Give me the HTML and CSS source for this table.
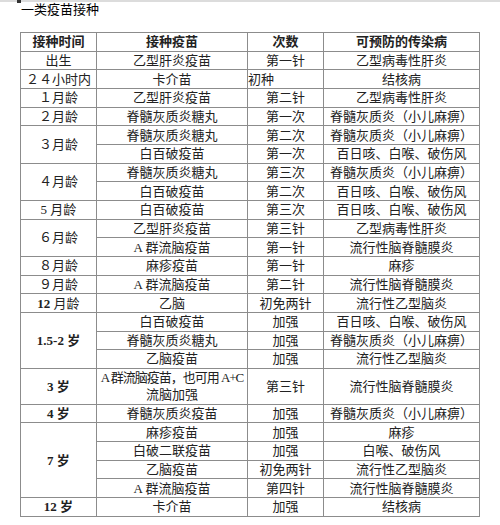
FILE: index.html
```html
<!DOCTYPE html>
<html lang="zh-CN">
<head>
<meta charset="utf-8">
<title>一类疫苗接种</title>
<link rel="stylesheet" href="styles.css">
</head>
<body>
<div class="topbar"><span class="mark"></span></div>
<h1 class="title">一类疫苗接种</h1>
<table class="schedule">
  <colgroup>
    <col class="c1"><col class="c2"><col class="c3"><col class="c4">
  </colgroup>
  <thead>
    <tr><th>接种时间</th><th>接种疫苗</th><th>次数</th><th>可预防的传染病</th></tr>
  </thead>
  <tbody>
    <tr><td>出生</td><td>乙型肝炎疫苗</td><td>第一针</td><td>乙型病毒性肝炎</td></tr>
    <tr><td>２４小时内</td><td>卡介苗</td><td class="left">初种</td><td>结核病</td></tr>
    <tr><td>１月龄</td><td>乙型肝炎疫苗</td><td>第二针</td><td>乙型病毒性肝炎</td></tr>
    <tr><td>２月龄</td><td>脊髓灰质炎糖丸</td><td>第一次</td><td>脊髓灰质炎（小儿麻痹）</td></tr>
    <tr><td rowspan="2">３月龄</td><td>脊髓灰质炎糖丸</td><td>第二次</td><td>脊髓灰质炎（小儿麻痹）</td></tr>
    <tr><td>白百破疫苗</td><td>第一次</td><td>百日咳、白喉、破伤风</td></tr>
    <tr><td rowspan="2">４月龄</td><td>脊髓灰质炎糖丸</td><td>第三次</td><td>脊髓灰质炎（小儿麻痹）</td></tr>
    <tr><td>白百破疫苗</td><td>第二次</td><td>百日咳、白喉、破伤风</td></tr>
    <tr><td>5 月龄</td><td>白百破疫苗</td><td>第三次</td><td>百日咳、白喉、破伤风</td></tr>
    <tr><td rowspan="2">６月龄</td><td>乙型肝炎疫苗</td><td>第三针</td><td>乙型病毒性肝炎</td></tr>
    <tr><td>A 群流脑疫苗</td><td>第一针</td><td>流行性脑脊髓膜炎</td></tr>
    <tr><td>８月龄</td><td>麻疹疫苗</td><td>第一针</td><td>麻疹</td></tr>
    <tr><td>９月龄</td><td>A 群流脑疫苗</td><td>第二针</td><td>流行性脑脊髓膜炎</td></tr>
    <tr><td><b>12</b> 月龄</td><td>乙脑</td><td>初免两针</td><td>流行性乙型脑炎</td></tr>
    <tr><td rowspan="3" class="bold">1.5-2 岁</td><td>白百破疫苗</td><td>加强</td><td>百日咳、白喉、破伤风</td></tr>
    <tr><td>脊髓灰质炎糖丸</td><td>加强</td><td>脊髓灰质炎（小儿麻痹）</td></tr>
    <tr><td>乙脑疫苗</td><td>加强</td><td>流行性乙型脑炎</td></tr>
    <tr class="tall"><td class="bold">3 岁</td><td class="wrap"><span class="l1">A 群流脑疫苗，也可用 A+C</span><span class="l2">流脑加强</span></td><td>第三针</td><td>流行性脑脊髓膜炎</td></tr>
    <tr><td class="bold">4 岁</td><td>脊髓灰质炎疫苗</td><td>加强</td><td>脊髓灰质炎（小儿麻痹）</td></tr>
    <tr><td rowspan="4" class="bold">7 岁</td><td>麻疹疫苗</td><td>加强</td><td>麻疹</td></tr>
    <tr><td>白破二联疫苗</td><td>加强</td><td>白喉、破伤风</td></tr>
    <tr><td>乙脑疫苗</td><td>初免两针</td><td>流行性乙型脑炎</td></tr>
    <tr><td>A 群流脑疫苗</td><td>第四针</td><td>流行性脑脊髓膜炎</td></tr>
    <tr><td class="bold">12 岁</td><td>卡介苗</td><td>加强</td><td>结核病</td></tr>
  </tbody>
</table>
</body>
</html>
```

FILE: styles.css
```css
html, body {
  margin: 0;
  padding: 0;
  background: #ffffff;
}

body {
  width: 500px;
  height: 525px;
  overflow: hidden;
  font-family: "Liberation Serif", "Noto Sans CJK SC", serif;
  color: #222222;
}

.topbar {
  height: 2px;
  background: #dcdcdc;
  position: relative;
}

.topbar .mark {
  position: absolute;
  left: 17px;
  top: 0;
  width: 4px;
  height: 3px;
  background: #333;
}

.title {
  margin: 0 0 0 21px;
  height: 30px;
  font-size: 13px;
  line-height: 14px;
  font-weight: normal;
  font-family: "Noto Sans CJK SC", sans-serif;
  color: #000000;
}

.schedule {
  margin-left: 20px;
  border-collapse: collapse;
  table-layout: fixed;
  width: 459px;
  font-size: 13px;
  line-height: 15px;
}

.c1 { width: 76px; }
.c2 { width: 151px; }
.c3 { width: 76px; }
.c4 { width: 156px; }

.schedule th,
.schedule td {
  border: 1px solid #8c8c8c;
  padding: 0;
  text-align: center;
  vertical-align: middle;
  white-space: nowrap;
  font-weight: normal;
}

.schedule tr {
  height: 18.67px;
}

.schedule tr.tall {
  height: 36px;
}

.schedule th {
  font-weight: bold;
}

.schedule .left {
  text-align: left;
}

.schedule .bold,
.schedule b {
  font-weight: bold;
}

.schedule td.wrap {
  line-height: 17px;
}

.schedule .l1 {
  display: block;
  letter-spacing: -1px;
  text-align: center;
}

.schedule .l2 {
  display: block;
  width: 52px;
  margin: 0 auto;
  text-align: center;
}
```
